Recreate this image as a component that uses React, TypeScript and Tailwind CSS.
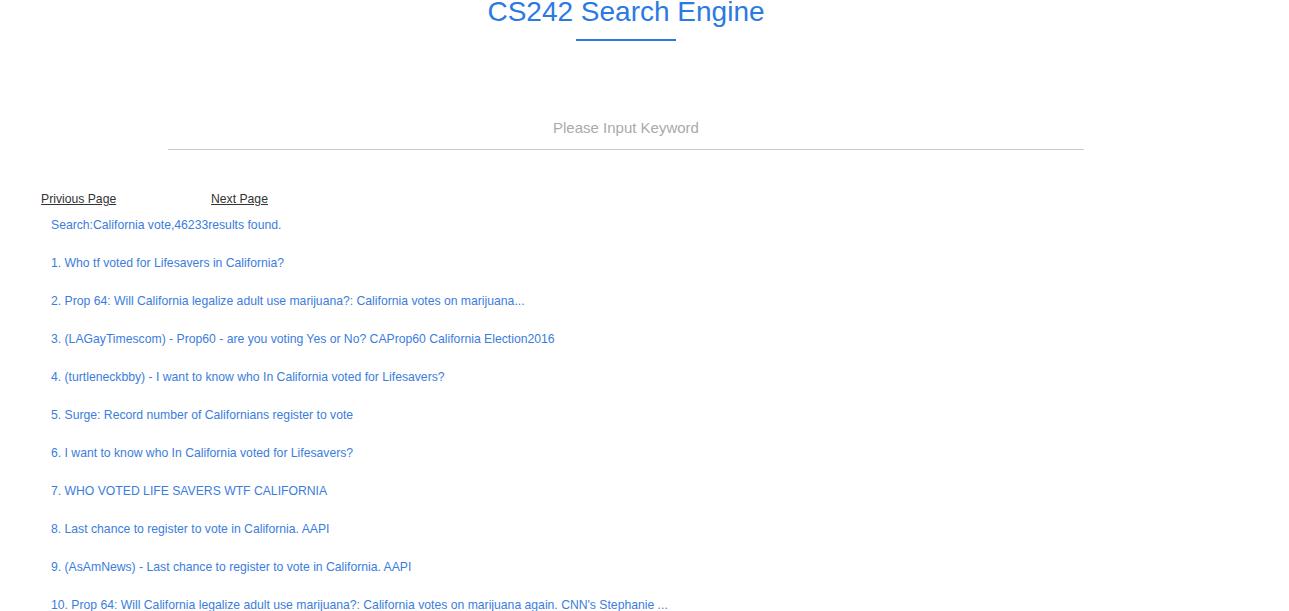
const results = [
  "Who tf voted for Lifesavers in California?",
  "Prop 64: Will California legalize adult use marijuana?: California votes on marijuana...",
  "(LAGayTimescom) - Prop60 - are you voting Yes or No? CAProp60 California Election2016",
  "(turtleneckbby) - I want to know who In California voted for Lifesavers?",
  "Surge: Record number of Californians register to vote",
  "I want to know who In California voted for Lifesavers?",
  "WHO VOTED LIFE SAVERS WTF CALIFORNIA",
  "Last chance to register to vote in California. AAPI",
  "(AsAmNews) - Last chance to register to vote in California. AAPI",
  "Prop 64: Will California legalize adult use marijuana?: California votes on marijuana again. CNN's Stephanie ...",
];

export default function App() {
  return (
    <div className="w-[1252px] bg-white font-['Liberation_Sans',Arial,sans-serif]">
      <header className="flex flex-col items-center">
        <h1 className="text-[28px] leading-[24px] text-[#2a7ae2]">CS242 Search Engine</h1>
        <div className="mt-[15px] h-[2px] w-[100px] bg-[#2a7ae2]" />
      </header>

      <div className="mt-[69px] flex justify-center">
        <input
          type="text"
          placeholder="Please Input Keyword"
          className="h-[40px] w-[916px] border-b border-[#cccccc] bg-transparent pb-[4px] text-center text-[15px] text-[#555] outline-none placeholder:text-[#aaaaaa]"
        />
      </div>

      <nav className="mt-[41px] flex pl-[41px] text-[12.2px] leading-[16px] text-[#333]">
        <a href="#" className="w-[170px] underline">Privious Page</a>
        <a href="#" className="underline">Next Page</a>
      </nav>

      <div className="pl-[51px] text-[12.2px] leading-[16px] text-[#3b7ddd]">
        <p className="mt-[10px]">Search:California vote,46233results found.</p>
        <ul>
          {results.map((title, i) => (
            <li key={i} className="mt-[22px]">
              <a href="#">
                {i + 1}. {title}
              </a>
            </li>
          ))}
        </ul>
      </div>
    </div>
  );
}
